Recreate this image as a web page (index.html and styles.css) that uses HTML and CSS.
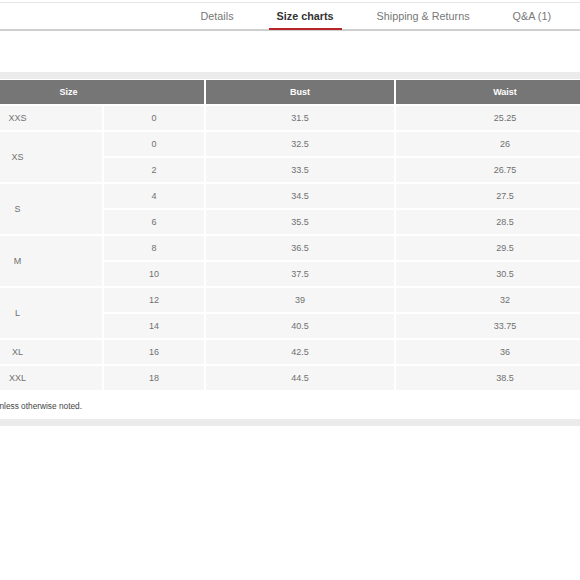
FILE: index.html
```html
<!DOCTYPE html>
<html>
<head>
<meta charset="utf-8">
<link rel="stylesheet" href="styles.css">
</head>
<body>
<nav class="tabs">
  <a class="tab">Details</a>
  <a class="tab active">Size charts</a>
  <a class="tab">Shipping &amp; Returns</a>
  <a class="tab">Q&amp;A (1)</a>
</nav>
<section class="chart">
  <table class="size-table">
    <colgroup>
      <col class="c1"><col class="c2"><col class="c3"><col class="c4">
    </colgroup>
    <thead>
      <tr><th colspan="2">Size</th><th>Bust</th><th>Waist</th></tr>
    </thead>
    <tbody>
      <tr><td>XXS</td><td>0</td><td>31.5</td><td>25.25</td></tr>
      <tr><td rowspan="2">XS</td><td>0</td><td>32.5</td><td>26</td></tr>
      <tr><td>2</td><td>33.5</td><td>26.75</td></tr>
      <tr><td rowspan="2">S</td><td>4</td><td>34.5</td><td>27.5</td></tr>
      <tr><td>6</td><td>35.5</td><td>28.5</td></tr>
      <tr><td rowspan="2">M</td><td>8</td><td>36.5</td><td>29.5</td></tr>
      <tr><td>10</td><td>37.5</td><td>30.5</td></tr>
      <tr><td rowspan="2">L</td><td>12</td><td>39</td><td>32</td></tr>
      <tr><td>14</td><td>40.5</td><td>33.75</td></tr>
      <tr><td>XL</td><td>16</td><td>42.5</td><td>36</td></tr>
      <tr><td>XXL</td><td>18</td><td>44.5</td><td>38.5</td></tr>
    </tbody>
  </table>
  <div class="note"><span>All measurements are in inches unless otherwise noted.</span></div>
</section>
</body>
</html>
```

FILE: styles.css
```css
html, body {
  margin: 0;
  padding: 0;
  background: #fff;
  font-family: "Liberation Sans", Arial, sans-serif;
}
body {
  overflow: hidden;
}
.tabs {
  margin-top: 2px;
  border-top: 1px solid #e6e6e6;
  border-bottom: 2px solid #cfcfcf;
  height: 26px;
  display: flex;
  justify-content: flex-end;
  align-items: stretch;
  padding-right: 21px;
  gap: 27px;
}
.tab {
  padding: 0 8px;
  font-size: 10.8px;
  color: #777;
  display: flex;
  align-items: center;
  border-bottom: 2px solid transparent;
  margin-bottom: -1px;
}
.tab.active {
  color: #333;
  font-weight: bold;
  border-bottom-color: #b5262b;
}
.chart {
  margin-top: 41px;
  border-top: 7px solid #ebebeb;
  border-bottom: 7px solid #ebebeb;
}
.size-table {
  margin-left: -69px;
  width: 683px;
  border-collapse: collapse;
  table-layout: fixed;
  font-size: 9px;
}
.c1 { width: 171px; }
.c2 { width: 102px; }
.c3 { width: 190px; }
.c4 { width: 220px; }
.size-table th {
  background: #767676;
  color: #fff;
  font-weight: bold;
  height: 24px;
  padding: 0;
  border: 2px solid #fff;
  border-top-width: 1px;
}
.size-table td {
  background: #f6f6f6;
  color: #707070;
  text-align: center;
  height: 24px;
  padding: 0;
  border: 2px solid #fff;
}
.note {
  width: 82px;
  display: flex;
  justify-content: flex-end;
  white-space: nowrap;
  height: 27px;
  align-items: center;
  font-size: 8.3px;
  color: #444;
}
```
